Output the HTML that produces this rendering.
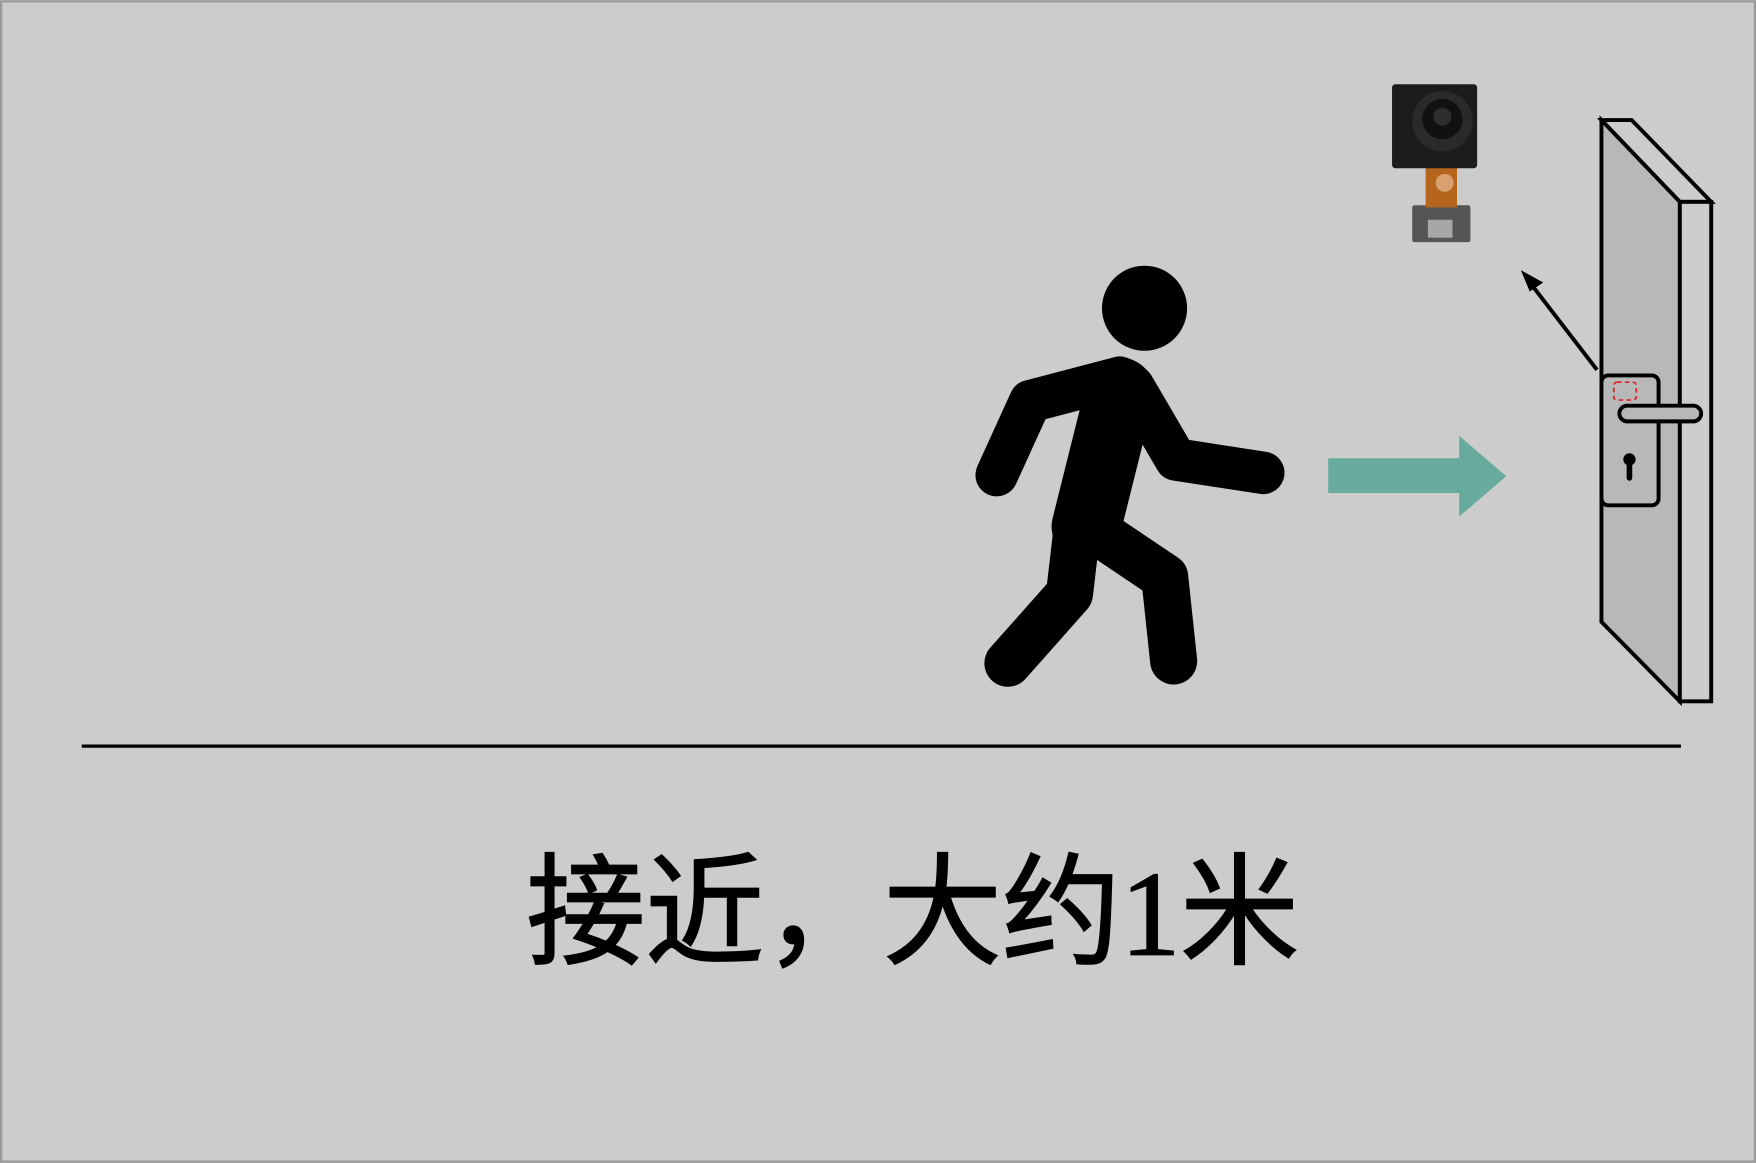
<!DOCTYPE html>
<html><head><meta charset="utf-8"><style>
html,body{margin:0;padding:0;background:#ccc;}
svg{display:block;}
</style></head><body>
<svg width="1756" height="1163" viewBox="0 0 1568 1038" xmlns="http://www.w3.org/2000/svg">
<rect x="1" y="1" width="1566" height="1036" fill="#cccccc" stroke="#9a9a9a" stroke-width="2"/>
<g fill="none" stroke="#000" stroke-linecap="round" stroke-linejoin="round">
<circle cx="1022" cy="275" r="38" fill="#000" stroke="none"/>
<polyline points="1000,337 920,358 890,424" stroke-width="38"/>
<polyline points="1012,345 1050,410 1128,422" stroke-width="38"/>
<polyline points="1000,350 970,470" stroke-width="62"/>
<polyline points="962,470 955,530 900,592" stroke-width="42"/>
<polyline points="985,478 1040,515 1048,590" stroke-width="42"/>
</g>
<polygon points="1186,409 1303,409 1303,389 1345,425 1303,461 1303,440 1186,440" fill="#66ab9e"/>
<g stroke="#000" stroke-width="3.5" stroke-linejoin="miter">
<polygon points="1430,107 1457,107 1528,180 1500,180" fill="#cccccc"/>
<polygon points="1430,107 1500,180 1500,626 1430,555" fill="#b8b8b8"/>
<rect x="1500" y="180" width="28" height="446" fill="#cccccc"/>
<rect x="1430" y="335" width="51" height="116" rx="6" fill="#b8b8b8"/>
<rect x="1446" y="362" width="73" height="14" rx="7" fill="#b8b8b8"/>
</g>
<rect x="1441" y="341" width="20" height="16" rx="3" fill="none" stroke="#e02020" stroke-width="1.5" stroke-dasharray="4,3"/>
<circle cx="1455" cy="410" r="5.5" fill="#000"/>
<rect x="1452.5" y="410" width="5" height="19" rx="2.5" fill="#000"/>
<line x1="1426" y1="330" x2="1366" y2="252" stroke="#000" stroke-width="3.5"/>
<polygon points="1358,241 1378,252 1366,260" fill="#000"/>
<rect x="1261" y="183" width="52" height="33" rx="2" fill="#555"/>
<rect x="1275" y="196" width="22" height="16" fill="#bbb" opacity="0.8"/>
<rect x="1273" y="148" width="28" height="37" fill="#b5651d"/>
<circle cx="1290" cy="163" r="8" fill="#d9a070"/>
<rect x="1243" y="75" width="76" height="75" rx="3" fill="#1c1c1c"/>
<circle cx="1288" cy="108" r="27" fill="#2a2a2a"/>
<circle cx="1288" cy="106" r="18" fill="#111"/>
<circle cx="1288" cy="104" r="8" fill="#2e2e2e"/>
<line x1="73" y1="666" x2="1501" y2="666" stroke="#000" stroke-width="3"/>
<text x="470" y="852" font-size="108" textLength="690" lengthAdjust="spacingAndGlyphs" font-family="'Liberation Serif','Noto Sans CJK SC',serif" fill="#000" stroke="#000" stroke-width="1.5">接近，大约<tspan font-family="'Liberation Serif',serif">1</tspan>米</text>
</svg>
</body></html>
